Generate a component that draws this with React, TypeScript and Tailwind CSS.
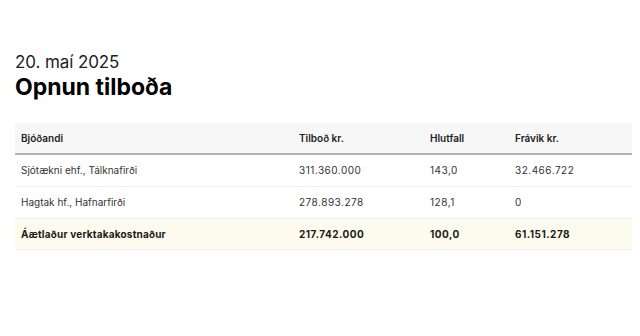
import React from "react";

const rows = [
  { name: "Sjótækni ehf., Tálknafirði", tilbod: "311.360.000", hlutfall: "143,0", fravik: "32.466.722", hl: false },
  { name: "Hagtak hf., Hafnarfirði", tilbod: "278.893.278", hlutfall: "128,1", fravik: "0", hl: false },
  { name: "Áætlaður verktakakostnaður", tilbod: "217.742.000", hlutfall: "100,0", fravik: "61.151.278", hl: true },
];

export default function App() {
  return (
    <div
      className="w-[640px] h-[336px] bg-white text-[#1a1a1a] px-[15px] pt-[52px]"
      style={{ fontFamily: "Inter, 'Noto Sans', sans-serif" }}
    >
      <div className="text-[17px] leading-[20px] text-[#222] tracking-[-0.1px]">20. maí 2025</div>
      <h1 className="text-[23px] leading-[30px] font-bold text-black">Opnun tilboða</h1>
      <div className="mt-[21px] w-[617px]">
        <div className="grid grid-cols-[278px_131px_85px_123px] h-[32px] items-center bg-[#f7f7f7] border-b-2 border-[#b4b4b4] text-[10px] font-semibold text-[#222]">
          <div className="pl-[6px]">Bjóðandi</div>
          <div className="pl-[6px]">Tilboð kr.</div>
          <div className="pl-[6px]">Hlutfall</div>
          <div className="pl-[6px]">Frávik kr.</div>
        </div>
        {rows.map((r) => (
          <div
            key={r.name}
            className={
              r.hl
                ? "grid grid-cols-[278px_131px_85px_123px] h-[31px] items-center border-b border-[#f0f0ec] bg-[#fdfbee] text-[10px] font-bold text-[#1a1a1a]"
                : "grid grid-cols-[278px_131px_85px_123px] h-[32px] items-center border-b border-[#f0f0f0] text-[10px] text-[#333]"
            }
          >
            <div className={r.hl ? "pl-[6px] tracking-[0.2px]" : "pl-[6px]"}>{r.name}</div>
            <div className="pl-[6px] tracking-[0.5px]">{r.tilbod}</div>
            <div className="pl-[6px] tracking-[0.5px]">{r.hlutfall}</div>
            <div className="pl-[6px] tracking-[0.5px]">{r.fravik}</div>
          </div>
        ))}
      </div>
    </div>
  );
}
